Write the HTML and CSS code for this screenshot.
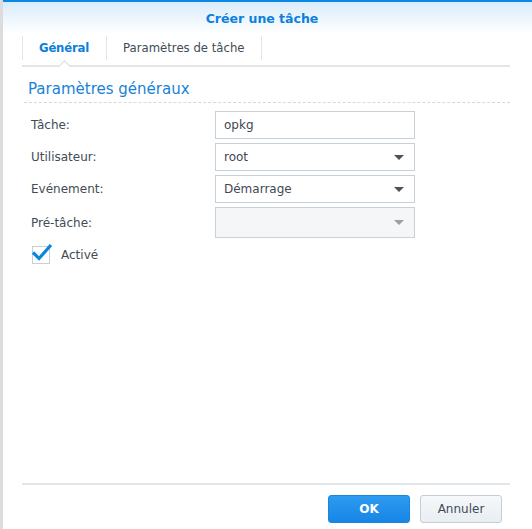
FILE: index.html
```html
<!DOCTYPE html>
<html lang="fr">
<head>
<meta charset="utf-8">
<title>Créer une tâche</title>
<link rel="stylesheet" href="styles.css">
</head>
<body>
<div class="window">
  <div class="header">Créer une tâche</div>
  <div class="tabs">
    <div class="tab active">Général</div>
    <div class="tab">Paramètres de tâche</div>
    <span class="notch"></span>
  </div>
  <div class="content">
    <div class="section-title">Paramètres généraux</div>
    <div class="form">
      <div class="row">
        <label class="label">Tâche:</label>
        <div class="field">opkg</div>
      </div>
      <div class="row">
        <label class="label">Utilisateur:</label>
        <div class="field select">root<span class="arrow"></span></div>
      </div>
      <div class="row">
        <label class="label">Evénement:</label>
        <div class="field select">Démarrage<span class="arrow"></span></div>
      </div>
      <div class="row">
        <label class="label">Pré-tâche:</label>
        <div class="field select disabled"><span class="arrow"></span></div>
      </div>
    </div>
    <div class="check-row">
      <span class="checkbox">
        <svg width="22" height="20" viewBox="0 0 22 20"><path d="M2 9.5 L8 15.5 L20 2" fill="none" stroke="#0a86e0" stroke-width="3.2" stroke-linejoin="miter" stroke-linecap="butt"/></svg>
      </span>
      <span class="check-label">Activé</span>
    </div>
  </div>
  <div class="footer">
    <button class="btn primary">OK</button>
    <button class="btn">Annuler</button>
  </div>
</div>
</body>
</html>
```
FILE: styles.css
```css
html, body {
  margin: 0;
  padding: 0;
  background: #fff;
}
body {
  width: 532px;
  height: 529px;
  overflow: hidden;
  font-family: "DejaVu Sans", Verdana, sans-serif;
  color: #414b55;
}
.window {
  height: 529px;
  display: flex;
  flex-direction: column;
  border-left: 3px solid #dcdcdc;
  box-sizing: border-box;
}
.header {
  height: 32px;
  border-top: 2px solid #0a86e4;
  background: linear-gradient(#d9ecfa, #ffffff);
  text-align: center;
  font-weight: bold;
  font-size: 12.5px;
  line-height: 34px;
  color: #0c80dc;
  padding-right: 11px;
}
.tabs {
  position: relative;
  display: flex;
  margin: 1px 22px 0 19px;
  padding-top: 1px;
  height: 29px;
  border-bottom: 2px solid #e3e6e9;
}
.tab {
  height: 24px;
  line-height: 24px;
  padding: 0 17px 0 16px;
  font-size: 11.7px;
  color: #424c56;
  border-left: 1px solid #e1e5e8;
}
.tab:last-of-type {
  border-right: 1px solid #e1e5e8;
}
.tab.active {
  font-weight: bold;
  color: #0c80dc;
  letter-spacing: -0.2px;
}
.notch {
  position: absolute;
  left: 38px;
  bottom: -6px;
  width: 8px;
  height: 8px;
  background: #fff;
  border-left: 1px solid #d6dade;
  border-top: 1px solid #d6dade;
  transform: rotate(45deg);
}
.content {
  flex: 1;
  padding: 11px 22px 0 21px;
}
.section-title {
  font-size: 15px;
  color: #1882d8;
  padding: 0 0 4px 4px;
  height: 20px;
  line-height: 22px;
  border-bottom: 1px dashed #d3d9df;
}
.form {
  padding-top: 8px;
  display: flex;
  flex-direction: column;
  gap: 4px;
}
.row {
  display: flex;
  align-items: center;
}
.label {
  width: 184px;
  padding-left: 7px;
  font-size: 12px;
  color: #424c56;
}
.field {
  position: relative;
  box-sizing: border-box;
  width: 200px;
  height: 28px;
  border: 1px solid #c8d0d8;
  padding-left: 8px;
  line-height: 26px;
  font-size: 12px;
  color: #3f4852;
  background: #fff;
}
.field.disabled {
  background: #f5f6f8;
  height: 31px;
}
.arrow {
  position: absolute;
  right: 10px;
  top: 11px;
  width: 0;
  height: 0;
  border-left: 5px solid transparent;
  border-right: 5px solid transparent;
  border-top: 5px solid #4a525b;
}
.disabled .arrow {
  top: 12px;
  border-top-color: #9aa0a6;
}
.check-row {
  display: flex;
  align-items: center;
  margin-top: 8px;
  padding-left: 8px;
}
.checkbox {
  position: relative;
  box-sizing: border-box;
  width: 18px;
  height: 18px;
  border: 1px solid #c6d0da;
  background: #fff;
}
.checkbox svg {
  position: absolute;
  left: -2px;
  top: -4px;
}
.check-label {
  margin-left: 11px;
  font-size: 12px;
  color: #424c56;
}
.footer {
  margin: 0 22px 0 19px;
  border-top: 2px solid #e3e6e9;
  height: 34px;
  display: flex;
  justify-content: flex-end;
  align-items: flex-start;
  gap: 10px;
  padding: 10px 8px 0 0;
}
.btn {
  width: 82px;
  height: 28px;
  border-radius: 3px;
  border: 1px solid #c4ccd4;
  background: linear-gradient(#f6f8fa, #e9eef2);
  font-family: "DejaVu Sans", Verdana, sans-serif;
  font-size: 12px;
  color: #414b55;
  padding: 0;
}
.btn.primary {
  border-color: #1a86dc;
  background: linear-gradient(#2e9bf0, #1686e6);
  color: #fff;
  font-weight: bold;
}
```
